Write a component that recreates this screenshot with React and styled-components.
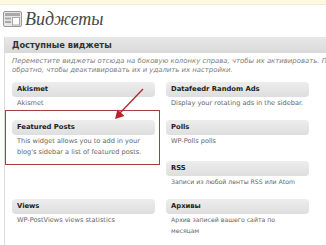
import React from 'react';
import styled, { createGlobalStyle } from 'styled-components';

const GlobalStyle = createGlobalStyle`
  html, body {
    margin: 0;
    padding: 0;
    background: #fff;
    overflow: hidden;
  }
  body {
    font-family: 'DejaVu Sans', Verdana, sans-serif;
    width: 326px;
    height: 245px;
  }
`;

const Page = styled.div`
  position: relative;
  width: 326px;
  height: 245px;
  overflow: hidden;
`;

const TopStrip = styled.div`
  height: 4px;
  background: #fcf9e3;
  border-bottom: 1px solid #f3efd2;
`;

const TitleRow = styled.div`
  display: flex;
  align-items: center;
  gap: 3px;
  padding-left: 3px;
  height: 26px;
  margin-top: 1px;
`;

const Title = styled.h2`
  margin: 0;
  font-family: 'Liberation Serif', 'Times New Roman', serif;
  font-style: italic;
  font-weight: normal;
  font-size: 18px;
  color: #464646;
`;

const Panel = styled.div`
  margin-left: 4px;
  margin-top: 5px;
  width: 440px;
  border-left: 1px solid #dcdcdc;
  padding-bottom: 20px;
`;

const PanelHeader = styled.div`
  height: 16px;
  line-height: 16px;
  padding-left: 7px;
  background: linear-gradient(#e8e8e8, #d9d9d9);
  font-size: 8.3px;
  font-weight: bold;
  color: #333;
`;

const PanelDesc = styled.p`
  margin: 0;
  padding: 4px 0 0 7px;
  font-size: 6.9px;
  line-height: 9px;
  font-style: italic;
  color: #7a7a7a;
  white-space: nowrap;
`;

const Grid = styled.div`
  display: grid;
  grid-template-columns: 143px 143px;
  grid-template-rows: 38px 41px 38px auto;
  column-gap: 11px;
  margin: 7px 0 0 7px;
`;

const Widget = styled.div`
  position: relative;
  grid-column: ${p => p.$col};
  grid-row: ${p => p.$row};
`;

const WidgetBar = styled.div`
  height: 15px;
  line-height: 15px;
  padding-left: 5px;
  border-radius: 4px;
  background: linear-gradient(#ededed, #dedede);
  font-size: 6.8px;
  font-weight: bold;
  color: #222;
`;

const WidgetDesc = styled.p`
  margin: 1px 0 0 5px;
  max-width: ${p => p.$maxWidth || 'none'};
  font-size: ${p => (p.$cyr ? '6.2px' : '6.6px')};
  line-height: 10.5px;
  color: #666;
`;

const Highlight = styled.div`
  position: absolute;
  left: -7px;
  top: -10px;
  width: 153px;
  height: 53px;
  border: 1.5px solid #a63d44;
  pointer-events: none;
`;

const Arrow = styled.svg`
  position: absolute;
  left: 0;
  top: 0;
  pointer-events: none;
`;

const WidgetIcon = () => (
  <svg width="19" height="16" viewBox="0 0 19 16">
    <rect x="0.5" y="0.5" width="18" height="15" rx="1.5" fill="#e6e6e6" stroke="#9a9a9a" />
    <rect x="2" y="2" width="15" height="3" fill="#a9a9a9" />
    <rect x="2" y="6.5" width="6" height="2" fill="#a9a9a9" />
    <rect x="2" y="10" width="6" height="2" fill="#a9a9a9" />
    <rect x="9.5" y="6.5" width="7" height="7.5" fill="#fff" stroke="#a9a9a9" />
  </svg>
);

const widgets = [
  { col: 1, row: 1, name: 'Akismet', desc: 'Akismet' },
  { col: 1, row: '2 / span 2', name: 'Featured Posts', desc: "This widget allows you to add in your blog's sidebar a list of featured posts.", marked: true },
  { col: 1, row: 4, name: 'Views', desc: 'WP-PostViews views statistics' },
  { col: 2, row: 1, name: 'Datafeedr Random Ads', desc: 'Display your rotating ads in the sidebar.' },
  { col: 2, row: 2, name: 'Polls', desc: 'WP-Polls polls' },
  { col: 2, row: 3, name: 'RSS', desc: 'Записи из любой ленты RSS или Atom', cyr: true },
  { col: 2, row: 4, name: 'Архивы', desc: 'Архив записей вашего сайта по месяцам', cyr: true, maxWidth: '120px' },
];

export default function App() {
  return (
    <Page>
      <GlobalStyle />
      <TopStrip />
      <TitleRow>
        <WidgetIcon />
        <Title>Виджеты</Title>
      </TitleRow>
      <Panel>
        <PanelHeader>Доступные виджеты</PanelHeader>
        <PanelDesc>
          Переместите виджеты отсюда на боковую колонку справа, чтобы их активировать. Перетащите их
          <br />
          обратно, чтобы деактивировать их и удалить их настройки.
        </PanelDesc>
        <Grid>
          {widgets.map(w => (
            <Widget key={w.name} $col={w.col} $row={w.row}>
              {w.marked && <Highlight />}
              <WidgetBar>{w.name}</WidgetBar>
              <WidgetDesc $cyr={w.cyr} $maxWidth={w.maxWidth}>{w.desc}</WidgetDesc>
            </Widget>
          ))}
        </Grid>
      </Panel>
      <Arrow width="326" height="245" viewBox="0 0 326 245">
        <line x1="143" y1="89" x2="120" y2="113" stroke="#b3262c" strokeWidth="1.3" />
        <polygon points="115,119 117.5,109.5 124.5,116" fill="#b3262c" />
      </Arrow>
    </Page>
  );
}
